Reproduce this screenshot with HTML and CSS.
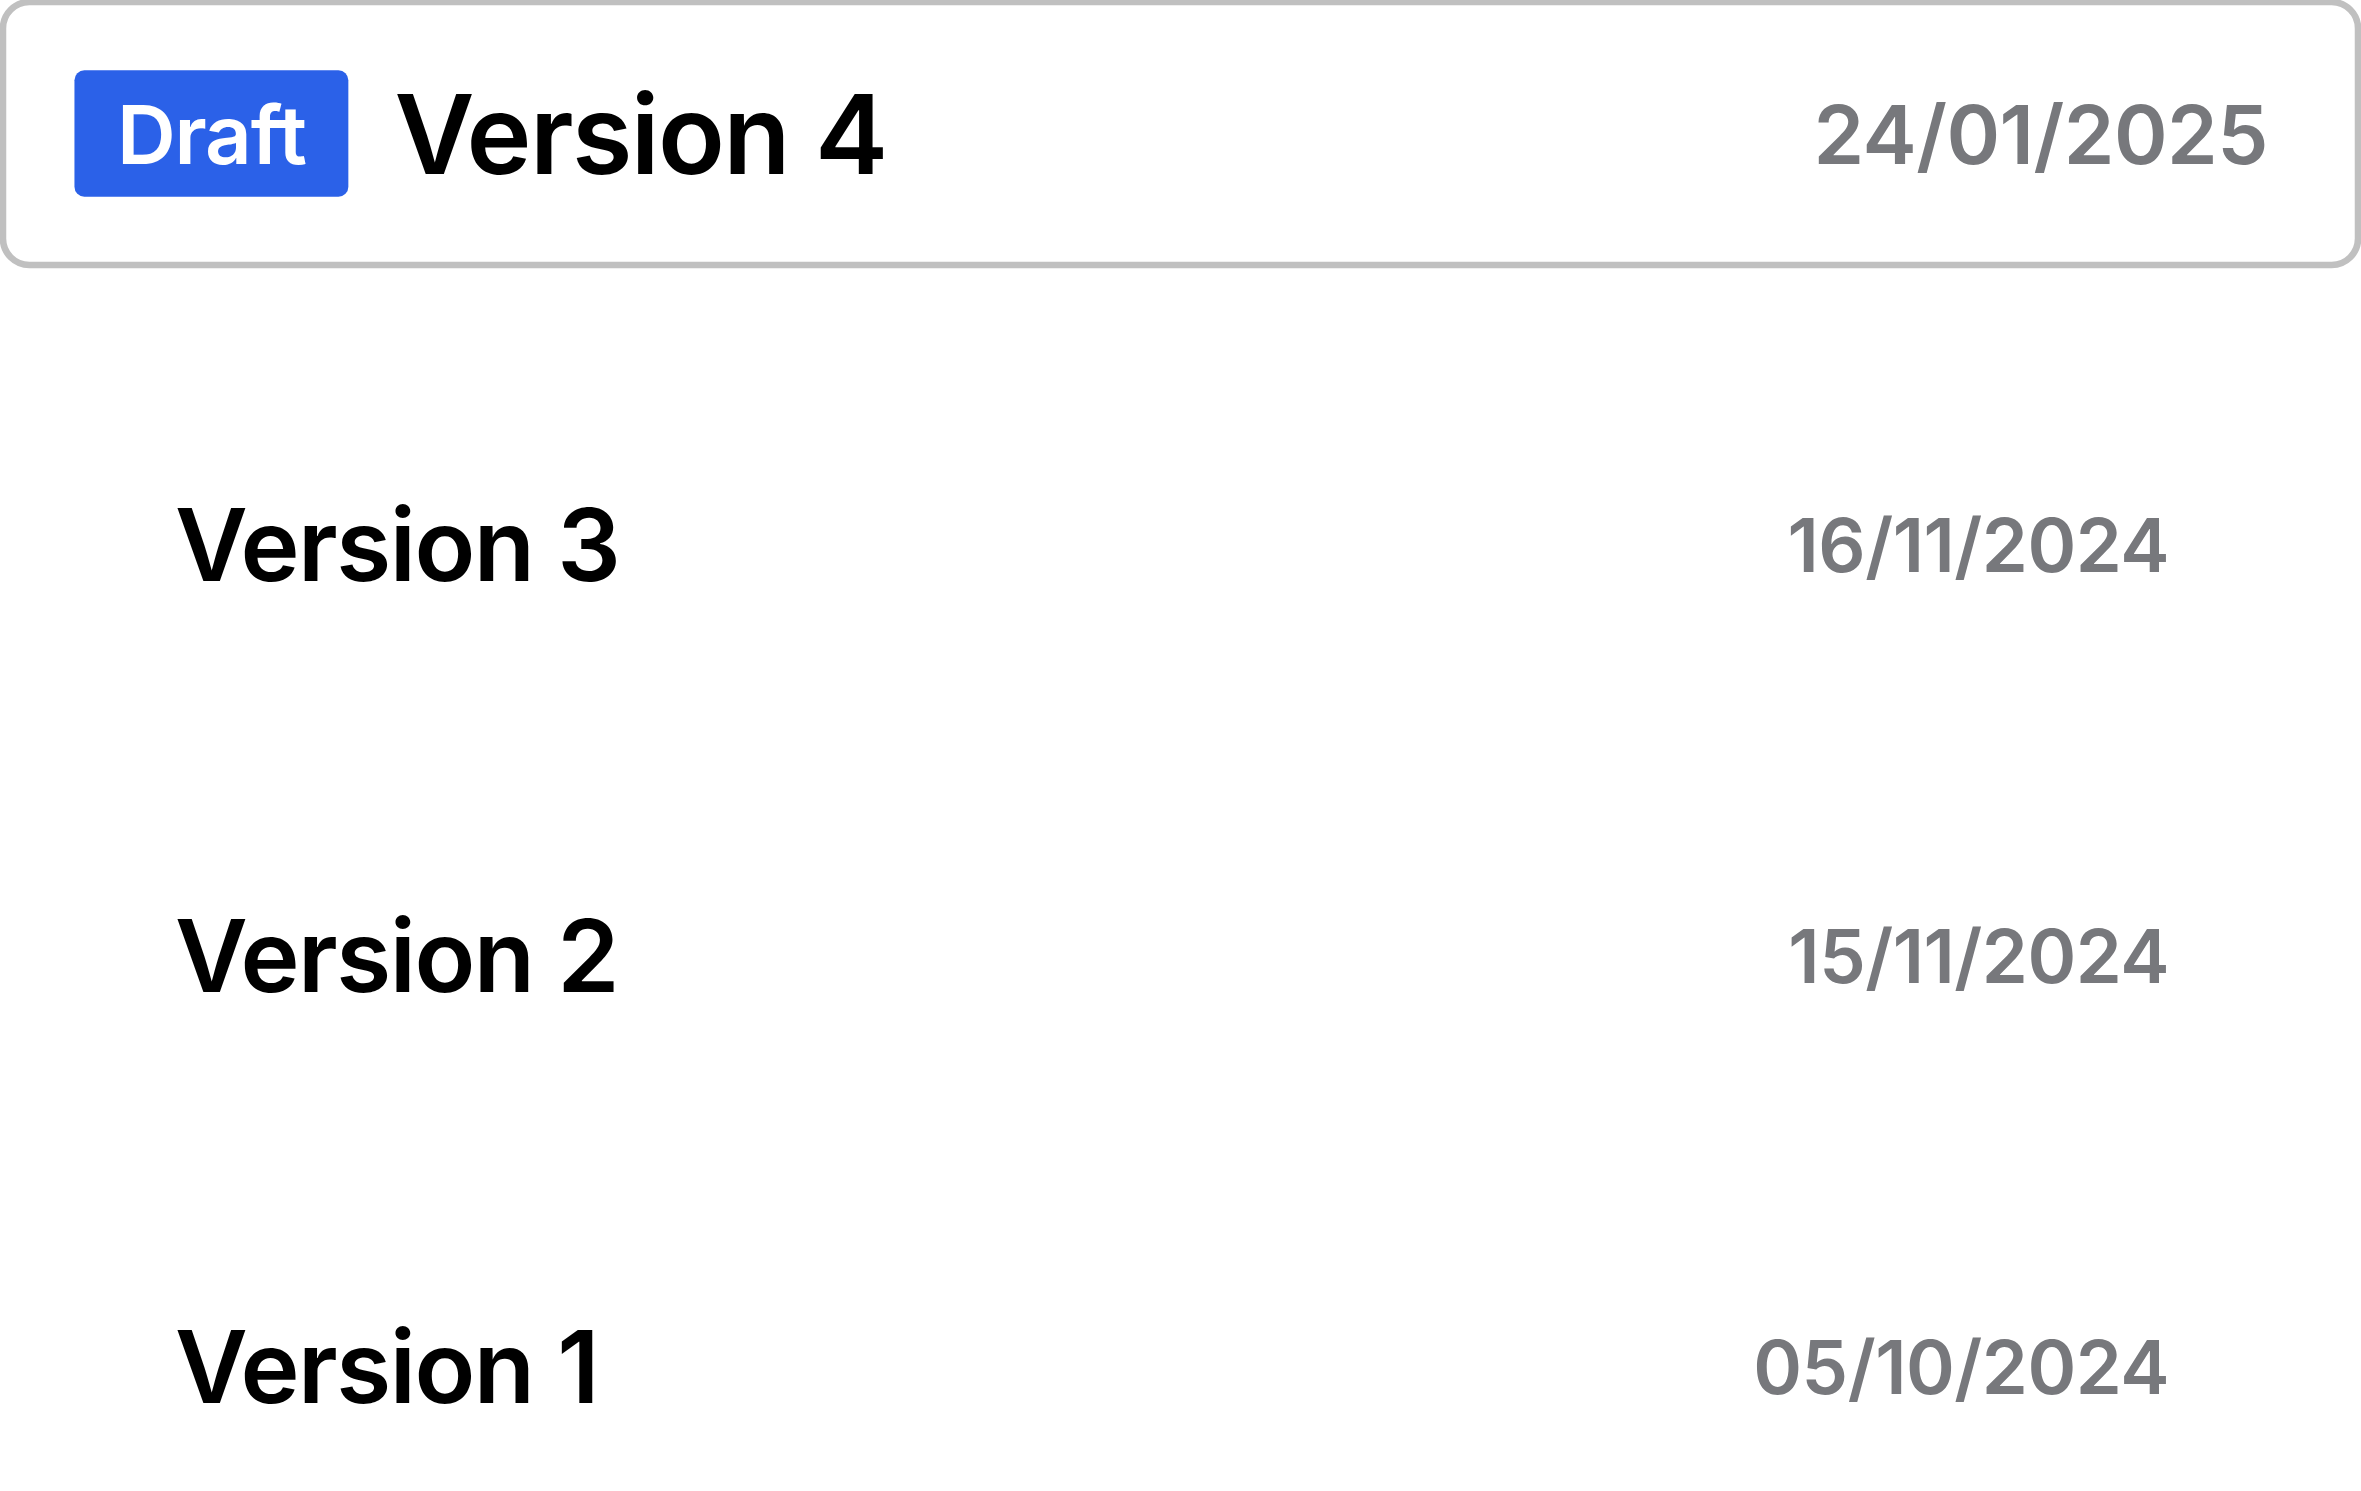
FILE: index.html
```html
<!DOCTYPE html>
<html lang="en">
<head>
<meta charset="utf-8">
<title>Versions</title>
<link rel="stylesheet" href="styles.css">
</head>
<body>
<main class="versions">
  <div class="version-row active">
    <div class="version-main">
      <span class="badge">Draft</span>
      <span class="version-name">Version 4</span>
    </div>
    <span class="version-date">24/01/2025</span>
  </div>
  <div class="version-row">
    <div class="version-main">
      <span class="version-name">Version 3</span>
    </div>
    <span class="version-date">16/11/2024</span>
  </div>
  <div class="version-row">
    <div class="version-main">
      <span class="version-name">Version 2</span>
    </div>
    <span class="version-date">15/11/2024</span>
  </div>
  <div class="version-row">
    <div class="version-main">
      <span class="version-name">Version 1</span>
    </div>
    <span class="version-date">05/10/2024</span>
  </div>
</main>
</body>
</html>
```

FILE: styles.css
```css
html, body {
  margin: 0;
  padding: 0;
  background: #ffffff;
}

body {
  font-family: "Inter", "Roboto", "Liberation Sans", sans-serif;
  overflow: hidden;
}

.versions {
  display: flex;
  flex-direction: column;
  gap: 166px;
  padding: 11px 107px 0 107px;
}

.version-row {
  box-sizing: border-box;
  height: 245px;
  display: flex;
  align-items: center;
  justify-content: space-between;
  padding: 0 85px 0 68px;
}

.version-row.active {
  border: 6px solid #c0c0c0;
  border-radius: 27px;
  padding: 0 79px 0 62px;
  transform: scale(1.1);
}

.version-main {
  display: flex;
  align-items: center;
  gap: 42px;
}

.badge {
  display: inline-flex;
  align-items: center;
  justify-content: center;
  box-sizing: border-box;
  height: 115px;
  width: 249px;
  border-radius: 9px;
  background: #2b61e8;
  color: #ffffff;
  font-size: 74px;
  font-weight: 600;
  letter-spacing: -1px;
}

.version-name {
  color: #000000;
  font-size: 100px;
  font-weight: 600;
  letter-spacing: -1.5px;
  line-height: 1;
}

.version-date {
  color: #77787c;
  font-size: 74px;
  font-weight: 600;
  letter-spacing: -0.5px;
  line-height: 1;
}
```
